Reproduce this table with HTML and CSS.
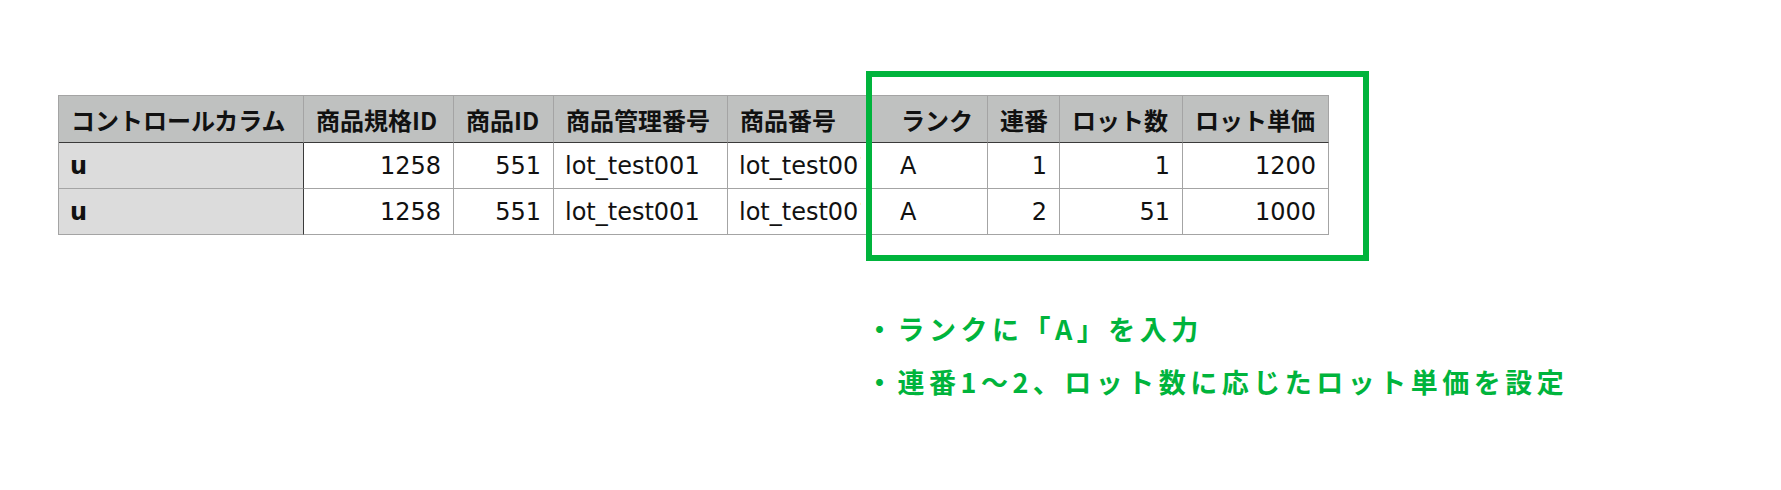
FILE: index.html
```html
<!DOCTYPE html>
<html lang="ja">
<head>
<meta charset="utf-8">
<title>ロット単価設定</title>
<link rel="stylesheet" href="styles.css">
</head>
<body>
<div class="page">
  <div class="sheet">
    <div class="cell head">コントロールカラム</div>
    <div class="cell head">商品規格ID</div>
    <div class="cell head">商品ID</div>
    <div class="cell head">商品管理番号</div>
    <div class="cell head">商品番号</div>
    <div class="cell head"></div>
    <div class="cell head">ランク</div>
    <div class="cell head">連番</div>
    <div class="cell head">ロット数</div>
    <div class="cell head">ロット単価</div>

    <div class="cell ctrl">u</div>
    <div class="cell num">1258</div>
    <div class="cell num">551</div>
    <div class="cell">lot_test001</div>
    <div class="cell clip"><span class="clip-text">lot_test001</span></div>
    <div class="cell"></div>
    <div class="cell">A</div>
    <div class="cell num">1</div>
    <div class="cell num">1</div>
    <div class="cell num">1200</div>

    <div class="cell ctrl">u</div>
    <div class="cell num">1258</div>
    <div class="cell num">551</div>
    <div class="cell">lot_test001</div>
    <div class="cell clip"><span class="clip-text">lot_test001</span></div>
    <div class="cell"></div>
    <div class="cell">A</div>
    <div class="cell num">2</div>
    <div class="cell num">51</div>
    <div class="cell num">1000</div>
  </div>

  <div class="highlight"></div>

  <div class="notes">
    <p class="note">・ランクに「A」を入力</p>
    <p class="note">・連番1〜2、ロット数に応じたロット単価を設定</p>
  </div>
</div>
</body>
</html>
```

FILE: styles.css
```css
html, body {
  margin: 0;
  padding: 0;
  background: #ffffff;
}

.page {
  position: relative;
  width: 1781px;
  height: 490px;
  box-sizing: border-box;
  padding: 95px 0 0 58px;
  font-family: "Noto Sans CJK JP", "Noto Sans", sans-serif;
  color: #111111;
}

.sheet {
  display: grid;
  grid-template-columns: 245px 150px 100px 174px 141px 20px 99px 72px 123px 146px;
  grid-template-rows: 47px 46px 46px;
  width: 1271px;
  box-sizing: border-box;
  border-top: 1px solid #a4a4a4;
  border-left: 1px solid #a4a4a4;
}

.cell {
  box-sizing: border-box;
  border-right: 1px solid #a4a4a4;
  border-bottom: 1px solid #a4a4a4;
  padding: 0 12px 0 11px;
  display: flex;
  align-items: center;
  font-family: "DejaVu Sans", "Noto Sans CJK JP", sans-serif;
  font-size: 24px;
  white-space: nowrap;
  overflow: hidden;
  background: #ffffff;
}

.clip {
  padding-right: 7px;
}

.clip-text {
  min-width: 0;
  overflow: hidden;
  white-space: nowrap;
}

.head {
  background: #bfc1c0;
  font-family: "Noto Sans CJK JP", "Noto Sans", sans-serif;
  font-weight: 700;
  border-bottom-color: #3a3a3a;
  padding-left: 12px;
}

.ctrl {
  background: #dcdcdc;
  font-weight: 700;
  border-right-color: #3a3a3a;
}

.num {
  justify-content: flex-end;
}

.highlight {
  position: absolute;
  left: 866px;
  top: 71px;
  width: 503px;
  height: 190px;
  box-sizing: border-box;
  border: 6px solid #00b43c;
}

.notes {
  margin: 67px 0 0 808px;
  color: #00b43c;
  font-weight: 700;
  font-size: 27px;
  letter-spacing: 4.5px;
}

.note {
  margin: 0;
  line-height: 53px;
  white-space: nowrap;
}
```
